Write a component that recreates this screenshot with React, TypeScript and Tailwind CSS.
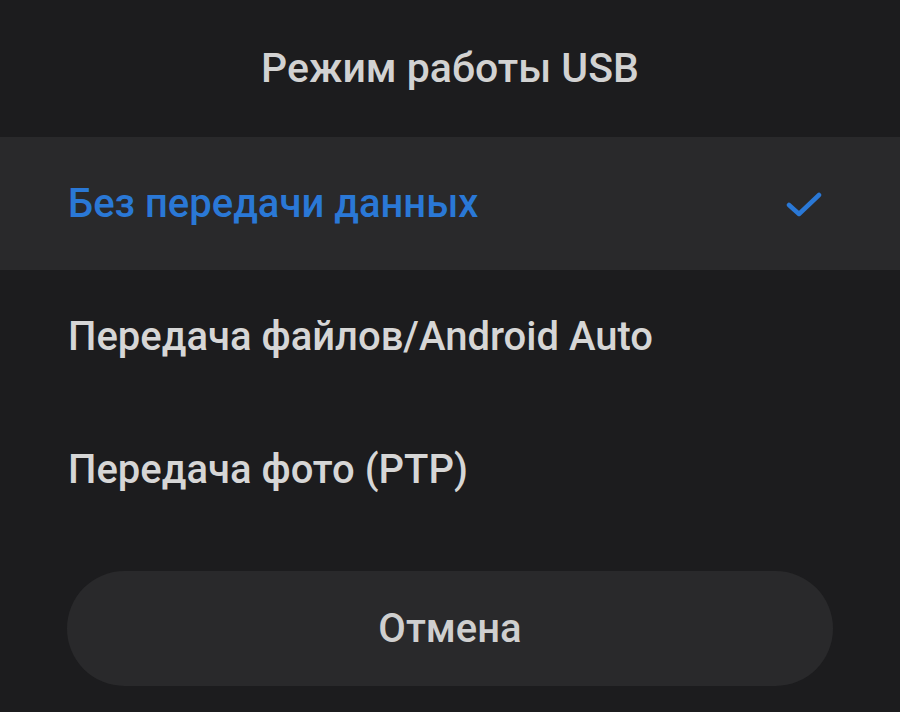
import React from "react";

export default function App() {
  const options = [
    { label: "Без передачи данных", selected: true },
    { label: "Передача файлов/Android Auto", selected: false },
    { label: "Передача фото (PTP)", selected: false },
  ];
  return (
    <div
      className="w-[900px] h-[712px] bg-[#1c1c1e] flex flex-col overflow-hidden"
      style={{ fontFamily: "Roboto, 'Noto Sans', sans-serif" }}
    >
      <div className="h-[137px] flex items-center justify-center pt-[1px]">
        <span className="text-[41px] font-medium text-[#d2d2d2]">
          Режим работы USB
        </span>
      </div>
      {options.map((o) => (
        <div
          key={o.label}
          className={`h-[133px] flex items-center justify-between pl-[68px] pr-[78px] ${
            o.selected ? "bg-[#29292b]" : ""
          }`}
        >
          <span
            className={`text-[40px] font-medium ${
              o.selected ? "text-[#2a78d6]" : "text-[#d6d6d6]"
            }`}
          >
            {o.label}
          </span>
          {o.selected && (
            <svg width="36" height="28" viewBox="0 0 36 28" className="mt-[2px]">
              <path
                d="M3 14 L13 23 L33 4"
                fill="none"
                stroke="#2a78d6"
                strokeWidth="4.5"
                strokeLinecap="round"
                strokeLinejoin="round"
              />
            </svg>
          )}
        </div>
      ))}
      <div className="px-[67px] pt-[35px]">
        <div className="h-[115px] rounded-full bg-[#29292b] flex items-center justify-center">
          <span className="text-[40px] font-medium text-[#cfcfcf]">Отмена</span>
        </div>
      </div>
    </div>
  );
}
